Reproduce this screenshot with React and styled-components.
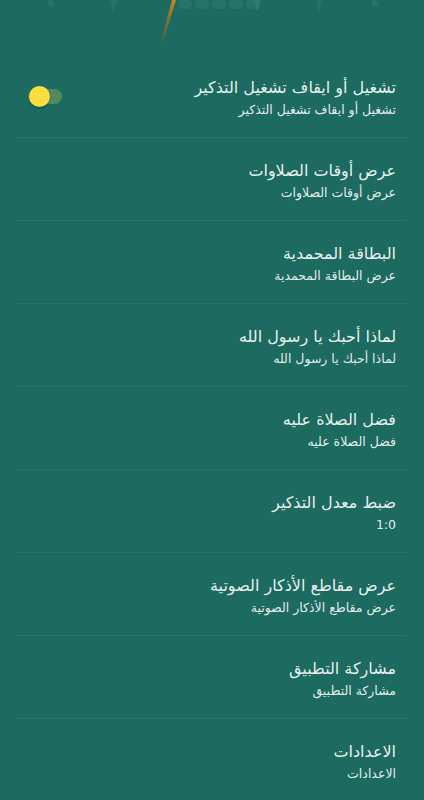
import React from 'react';
import styled, { createGlobalStyle } from 'styled-components';

const GlobalStyle = createGlobalStyle`
  html, body {
    margin: 0;
    padding: 0;
    background: #1c6a60;
  }
  body {
    font-family: "DejaVu Sans", "Noto Sans", sans-serif;
  }
`;

const Screen = styled.div`
  width: 424px;
  min-height: 800px;
  background: #1c6a60;
  overflow: hidden;
`;

const Header = styled.div`
  height: 55px;
  position: relative;
`;

const List = styled.div`
  direction: rtl;
  padding: 0 17px 0 16px;
`;

const Row = styled.div`
  display: flex;
  align-items: flex-start;
  justify-content: space-between;
  height: 82px;
  padding: 0 11px 0 12px;
  border-bottom: 1px solid ${(p) => (p.$last ? 'transparent' : 'rgba(255, 255, 255, 0.07)')};
`;

const Texts = styled.div`
  display: flex;
  flex-direction: column;
  padding-top: 21px;
`;

const Title = styled.div`
  font-size: 16px;
  line-height: 24px;
  color: rgba(255, 255, 255, 0.92);
`;

const Subtitle = styled.div`
  font-size: 12.5px;
  line-height: 20px;
  color: rgba(255, 255, 255, 0.9);
`;

const Switch = styled.div`
  position: relative;
  width: 34px;
  height: 21px;
  margin-top: 31px;
`;

const Track = styled.div`
  position: absolute;
  left: 0;
  top: 3px;
  width: 34px;
  height: 15px;
  border-radius: 8px;
  background: rgba(180, 200, 90, 0.35);
`;

const Thumb = styled.div`
  position: absolute;
  right: 12px;
  top: 0;
  width: 21px;
  height: 21px;
  border-radius: 50%;
  background: #fcdd40;
  box-shadow: 0 1px 2px rgba(0, 0, 0, 0.35);
`;

const items = [
  { title: 'تشغيل أو ايقاف تشغيل التذكير', sub: 'تشغيل أو ايقاف تشغيل التذكير', toggle: true },
  { title: 'عرض أوقات الصلاوات', sub: 'عرض أوقات الصلاوات' },
  { title: 'البطاقة المحمدية', sub: 'عرض البطاقة المحمدية' },
  { title: 'لماذا أحبك يا رسول الله', sub: 'لماذا أحبك يا رسول الله' },
  { title: 'فضل الصلاة عليه', sub: 'فضل الصلاة عليه' },
  { title: 'ضبط معدل التذكير', sub: '1:0' },
  { title: 'عرض مقاطع الأذكار الصوتية', sub: 'عرض مقاطع الأذكار الصوتية' },
  { title: 'مشاركة التطبيق', sub: 'مشاركة التطبيق' },
  { title: 'الاعدادات', sub: 'الاعدادات' },
];

// faint mosque silhouette and lamp streak cut off at the top of the screen
const HeaderArt = () => (
  <svg width="424" height="55" viewBox="0 0 424 55" style={{ position: 'absolute', left: 0, top: 0 }}>
    <defs>
      <linearGradient id="streak" x1="0" y1="0" x2="0" y2="1">
        <stop offset="0" stopColor="#c9891f" />
        <stop offset="0.6" stopColor="#8a6a2a" stopOpacity="0.6" />
        <stop offset="1" stopColor="#1c6a60" stopOpacity="0" />
      </linearGradient>
    </defs>
    <g fill="rgba(255,255,255,0.06)">
      <rect x="48" y="0" width="6" height="6" rx="2" />
      <path d="M110 0 Q113 6 112 11 L114 11 Q115 5 118 0 Z" />
      <rect x="178" y="0" width="14" height="9" rx="4" />
      <rect x="195" y="0" width="14" height="9" rx="4" />
      <rect x="212" y="0" width="14" height="9" rx="4" />
      <rect x="229" y="0" width="14" height="9" rx="4" />
      <rect x="246" y="0" width="14" height="9" rx="4" />
      <path d="M253 0 Q257 6 255 10 L258 10 Q258 4 262 0 Z" />
      <path d="M316 0 Q318 6 317 11 L320 11 Q320 5 322 0 Z" />
      <rect x="372" y="0" width="6" height="7" rx="2" />
    </g>
    <path d="M172 0 L176 0 L160 52 L158 52 Z" fill="url(#streak)" />
  </svg>
);

export default function App() {
  return (
    <Screen>
      <GlobalStyle />
      <Header>
        <HeaderArt />
      </Header>
      <List>
        {items.map((item, i) => (
          <Row key={i} $last={i === items.length - 1}>
            <Texts>
              <Title>{item.title}</Title>
              <Subtitle>{item.sub}</Subtitle>
            </Texts>
            {item.toggle && (
              <Switch>
                <Track />
                <Thumb />
              </Switch>
            )}
          </Row>
        ))}
      </List>
    </Screen>
  );
}
